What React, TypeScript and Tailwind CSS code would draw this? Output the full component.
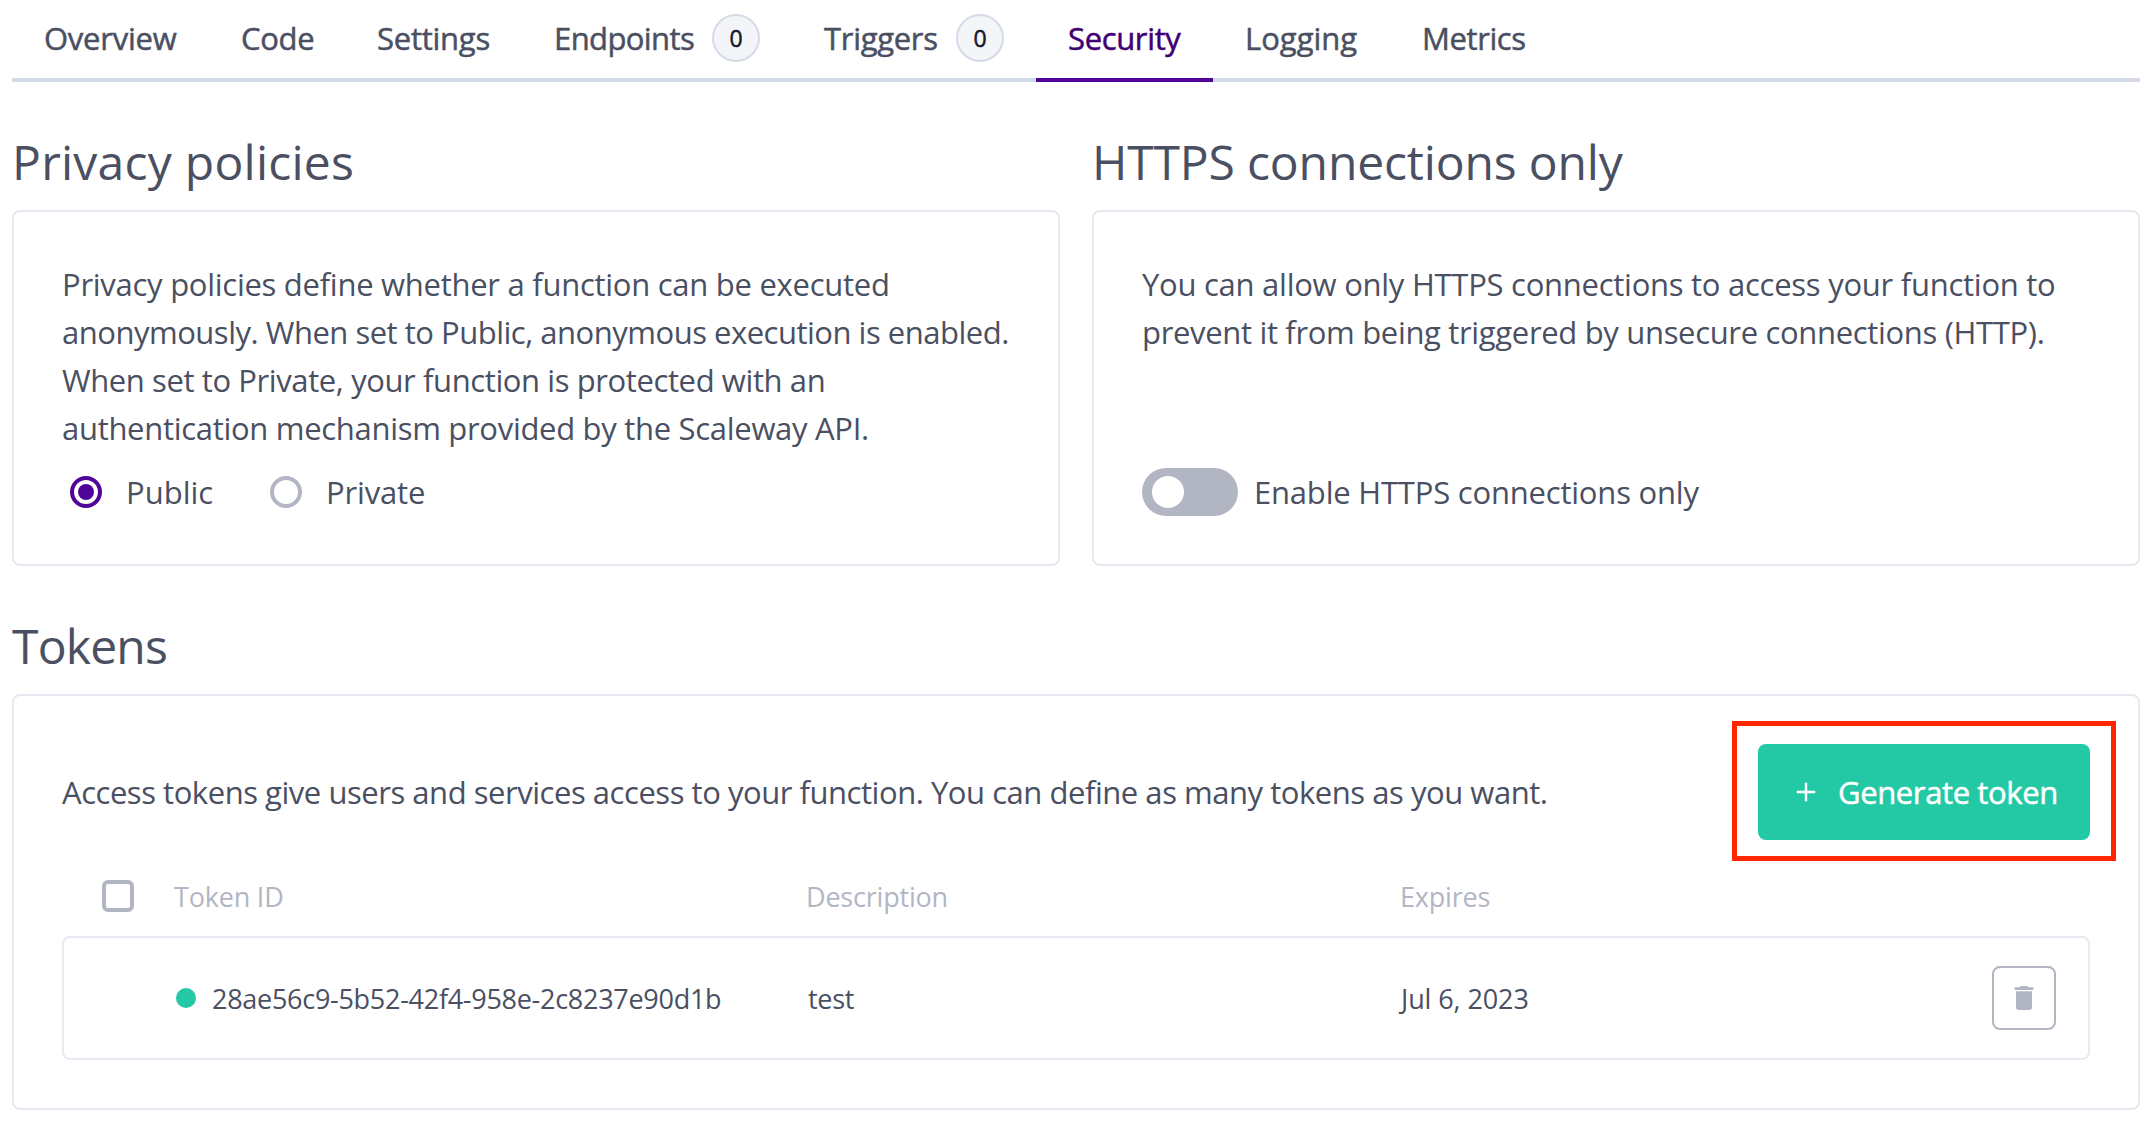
import type { ReactNode } from "react";

type TabProps = { label: string; width: string; spacing?: string; count?: number; active?: boolean };

const tabs: TabProps[] = [
  { label: "Overview", width: "w-[197px]", spacing: "tracking-[-0.25px]" },
  { label: "Code", width: "w-[136px]", spacing: "tracking-[-0.3px]" },
  { label: "Settings", width: "w-[177px]", spacing: "tracking-[-0.25px]" },
  { label: "Endpoints", width: "w-[270px]", spacing: "tracking-[-0.6px]", count: 0 },
  { label: "Triggers", width: "w-[244px]", spacing: "tracking-[-0.3px]", count: 0 },
  { label: "Security", width: "w-[177px]", spacing: "tracking-[-0.35px]", active: true },
  { label: "Logging", width: "w-[177px]", spacing: "tracking-[0px]" },
  { label: "Metrics", width: "w-[168px]", spacing: "tracking-[-0.4px]" },
];

function Tab({ label, width, spacing, count, active }: TabProps) {
  return (
    <button
      className={`${width} ${active ? "border-[#4f0599] text-[#3e0073]" : "border-[#d5dae9] text-[#4a4f62]"} flex h-[82px] shrink-0 items-center justify-between border-b-4 px-8 pb-0.5 text-[31px] font-medium`}
    >
      <span className={`${spacing} whitespace-nowrap [-webkit-text-stroke:0.5px_currentColor]`}>{label}</span>
      {count !== undefined && (
        <span className="flex size-12 shrink-0 items-center justify-center rounded-full border-2 border-[#d5dae9] bg-[#f4f5f8] text-[23px] leading-none text-[#151a2d] [-webkit-text-stroke:0.5px_currentColor]">
          {count}
        </span>
      )}
    </button>
  );
}

function Heading({ children, spacing = "" }: { children: ReactNode; spacing?: string }) {
  return <h2 className={`${spacing} mt-[50px] mb-[18px] h-[60px] text-[48px] leading-[60px] whitespace-nowrap`}>{children}</h2>;
}

function Card({ children }: { children: ReactNode }) {
  return <div className="flex flex-col rounded-lg border-2 border-[#e6e9f0] p-12">{children}</div>;
}

function Line({ children, spacing }: { children: ReactNode; spacing: string }) {
  return <span className={`${spacing} block whitespace-nowrap`}>{children}</span>;
}

function Radio({ label, checked, spacing }: { label: string; checked?: boolean; spacing: string }) {
  return (
    <label className="flex items-center gap-6">
      <span className={`${checked ? "border-[#4f0599]" : "border-[#b2b6c3]"} flex size-8 items-center justify-center rounded-full border-4`}>
        {checked && <span className="size-4 rounded-full bg-[#4f0599]" />}
      </span>
      <span className={spacing}>{label}</span>
    </label>
  );
}

export default function App() {
  return (
    <main className="h-[1124px] w-[2152px] overflow-hidden bg-white px-3 font-['Open_Sans',sans-serif] text-[31px] leading-[48px] text-[#4a4f62]">
      <nav className="flex">
        {tabs.map((t) => (
          <Tab key={t.label} {...t} />
        ))}
        <div className="grow border-b-4 border-[#d5dae9]" />
      </nav>

      <div className="grid grid-cols-2 gap-x-8">
        <section>
          <Heading spacing="tracking-[0.25px]">Privacy policies</Heading>
          <Card>
            <p className="h-48">
              <Line spacing="tracking-[-0.27px]">Privacy policies define whether a function can be executed</Line>
              <Line spacing="tracking-[-0.49px]">anonymously. When set to Public, anonymous execution is enabled.</Line>
              <Line spacing="tracking-[-0.4px]">When set to Private, your function is protected with an</Line>
              <Line spacing="tracking-[-0.3px]">authentication mechanism provided by the Scaleway API.</Line>
            </p>
            <div className="mt-4 flex h-12 items-center gap-14 pl-2">
              <div className="w-36">
                <Radio label="Public" checked spacing="tracking-[0px]" />
              </div>
              <Radio label="Private" spacing="tracking-[-0.15px]" />
            </div>
          </Card>
        </section>
        <section>
          <Heading spacing="tracking-[-0.15px]">HTTPS connections only</Heading>
          <Card>
            <p className="h-48">
              <Line spacing="tracking-[-0.26px]">You can allow only HTTPS connections to access your function to</Line>
              <Line spacing="tracking-[-0.33px]">prevent it from being triggered by unsecure connections (HTTP).</Line>
            </p>
            <div className="mt-4 flex h-12 items-center gap-4">
              <span className="flex h-12 w-24 items-center rounded-full bg-[#b2b6c3] pl-2.5">
                <span className="size-8 rounded-full bg-white" />
              </span>
              <span className="tracking-[-0.2px]">Enable HTTPS connections only</span>
            </div>
          </Card>
        </section>
      </div>

      <section>
        <Heading spacing="tracking-[-0.8px]">Tokens</Heading>
        <Card>
          <div className="flex h-24 items-center justify-between">
            <p className="tracking-[-0.46px] whitespace-nowrap">
              Access tokens give users and services access to your function. You can define as many tokens as you want.
            </p>
            <div className="relative">
              <button className="flex h-24 w-[332px] items-center rounded-lg bg-[#23c9a4] pl-[38px] text-[31px] font-medium text-white">
                <svg className="size-5" viewBox="0 0 20 20" fill="none" stroke="currentColor" strokeWidth="2.4">
                  <path d="M10 .7v18.600M.7 10h18.600" />
                </svg>
                <span className="ml-[22px] tracking-[-0.38px] whitespace-nowrap [-webkit-text-stroke:0.5px_currentColor]">Generate token</span>
              </button>
              <span className="pointer-events-none absolute -top-[23px] -right-[26px] -bottom-[21px] -left-[26px] border-[5px] border-[#ff2600]" />
            </div>
          </div>

          <div className="mt-4 grid h-20 grid-cols-[72px_632px_594px_1fr] items-center pl-10 text-[27px] text-[#b2b6c3]">
            <span className="size-8 rounded-[6px] border-4 border-[#b2b6c3]" />
            <span className="pt-0.5 tracking-[-0.2px]">Token ID</span>
            <span className="pt-0.5 tracking-[-0.2px]">Description</span>
            <span className="pt-0.5 tracking-[-0.2px]">Expires</span>
          </div>

          <div className="grid h-[124px] grid-cols-[72px_634px_593px_1fr_64px] items-center rounded-lg border-2 border-[#e8e9f1] pr-8 pl-[38px] text-[27px]">
            <span />
            <span className="flex items-center gap-4 pl-0.5">
              <span className="size-5 rounded-full bg-[#23c9a4]" />
              <span className="pt-0.5 tracking-[-0.28px]">28ae56c9-5b52-42f4-958e-2c8237e90d1b</span>
            </span>
            <span className="pt-0.5 tracking-[-0.3px]">test</span>
            <span className="pt-0.5 tracking-[-0.1px] whitespace-nowrap">Jul 6, 2023</span>
            <button className="flex size-16 items-center justify-center rounded-lg border-2 border-[#b2b6c3]">
              <svg className="h-6 w-5" viewBox="0 0 20 24" fill="#b2b6c3">
                <path d="M.7 1.3h5L6.7 0h6.600l1 1.300h5V4H.7zM2 5.300h16V21.300A2.700 2.700 0 0 1 15.300 24H4.700A2.700 2.700 0 0 1 2 21.300z" />
              </svg>
            </button>
          </div>
        </Card>
      </section>
    </main>
  );
}
